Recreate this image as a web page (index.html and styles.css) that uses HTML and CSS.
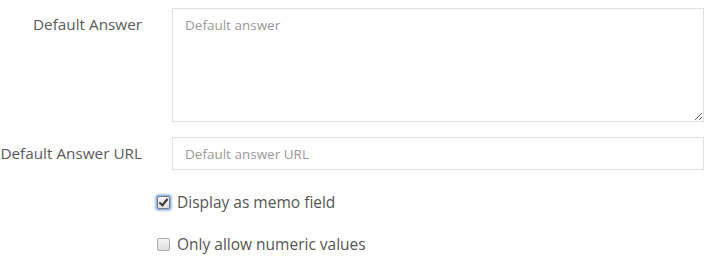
FILE: index.html
```html
<!DOCTYPE html>
<html>
<head>
<meta charset="utf-8">
<link rel="stylesheet" href="styles.css">
</head>
<body>
<form class="form">
  <div class="row">
    <label class="label" for="da">Default Answer</label>
    <div class="field">
      <textarea id="da" class="control textarea" placeholder="Default answer"></textarea>
    </div>
  </div>
  <div class="row">
    <label class="label" for="dau">Default Answer URL</label>
    <div class="field">
      <input id="dau" class="control input" type="text" placeholder="Default answer URL">
    </div>
  </div>
  <div class="checks">
    <label class="check"><input class="box focused" type="checkbox" checked><span>Display as memo field</span></label>
    <label class="check"><input class="box" type="checkbox"><span>Only allow numeric values</span></label>
  </div>
</form>
</body>
</html>
```

FILE: styles.css
```css
html, body {
  margin: 0;
  padding: 0;
  background: #fff;
}
body {
  font-family: "Open Sans", "Noto Sans", sans-serif;
  font-size: 15px;
  color: #555;
}
.form {
  padding: 8px 6px 0 0;
  display: flex;
  flex-direction: column;
}
.row {
  display: grid;
  grid-template-columns: 157px 1fr;
  margin-bottom: 15px;
}
.label {
  text-align: right;
  padding-right: 15px;
  padding-top: 6px;
  font-size: 15.3px;
  line-height: 20px;
  color: #5a5a5a;
  white-space: nowrap;
  direction: rtl;
}
.field {
  padding-left: 15px;
}
.control {
  display: block;
  width: 100%;
  box-sizing: border-box;
  border: 1px solid #e0e0e0;
  border-radius: 0;
  font-family: "Open Sans", "Noto Sans", sans-serif;
  font-size: 13.5px;
  color: #555;
  padding: 6px 12px;
  background: #fff;
  margin: 0;
  outline: none;
}
.control::placeholder {
  color: #999;
}
.textarea {
  height: 114px;
  resize: vertical;
  line-height: 20px;
}
.input {
  height: 33px;
  line-height: 20px;
}
.checks {
  display: flex;
  flex-direction: column;
  gap: 18px;
  padding-left: 157px;
  padding-top: 5px;
}
.check {
  display: flex;
  align-items: center;
  gap: 7px;
  font-size: 15.5px;
  color: #555;
  height: 24px;
}
.box {
  -webkit-appearance: none;
  appearance: none;
  margin: 0;
  width: 13px;
  height: 13px;
  box-sizing: border-box;
  border: 1px solid #a9a9a9;
  border-radius: 2px;
  background: linear-gradient(#f4f4f4, #dedede);
  position: relative;
  flex: none;
}
.box.focused {
  box-shadow: 0 0 0 1px #8fb2ea, 0 0 2px 2px rgba(100, 150, 230, 0.55);
  border-color: #7a7a7a;
}
.box:checked::after {
  content: "";
  position: absolute;
  left: 3px;
  top: 0px;
  width: 3px;
  height: 7px;
  border: solid #333;
  border-width: 0 2px 2px 0;
  transform: rotate(40deg);
}
```
